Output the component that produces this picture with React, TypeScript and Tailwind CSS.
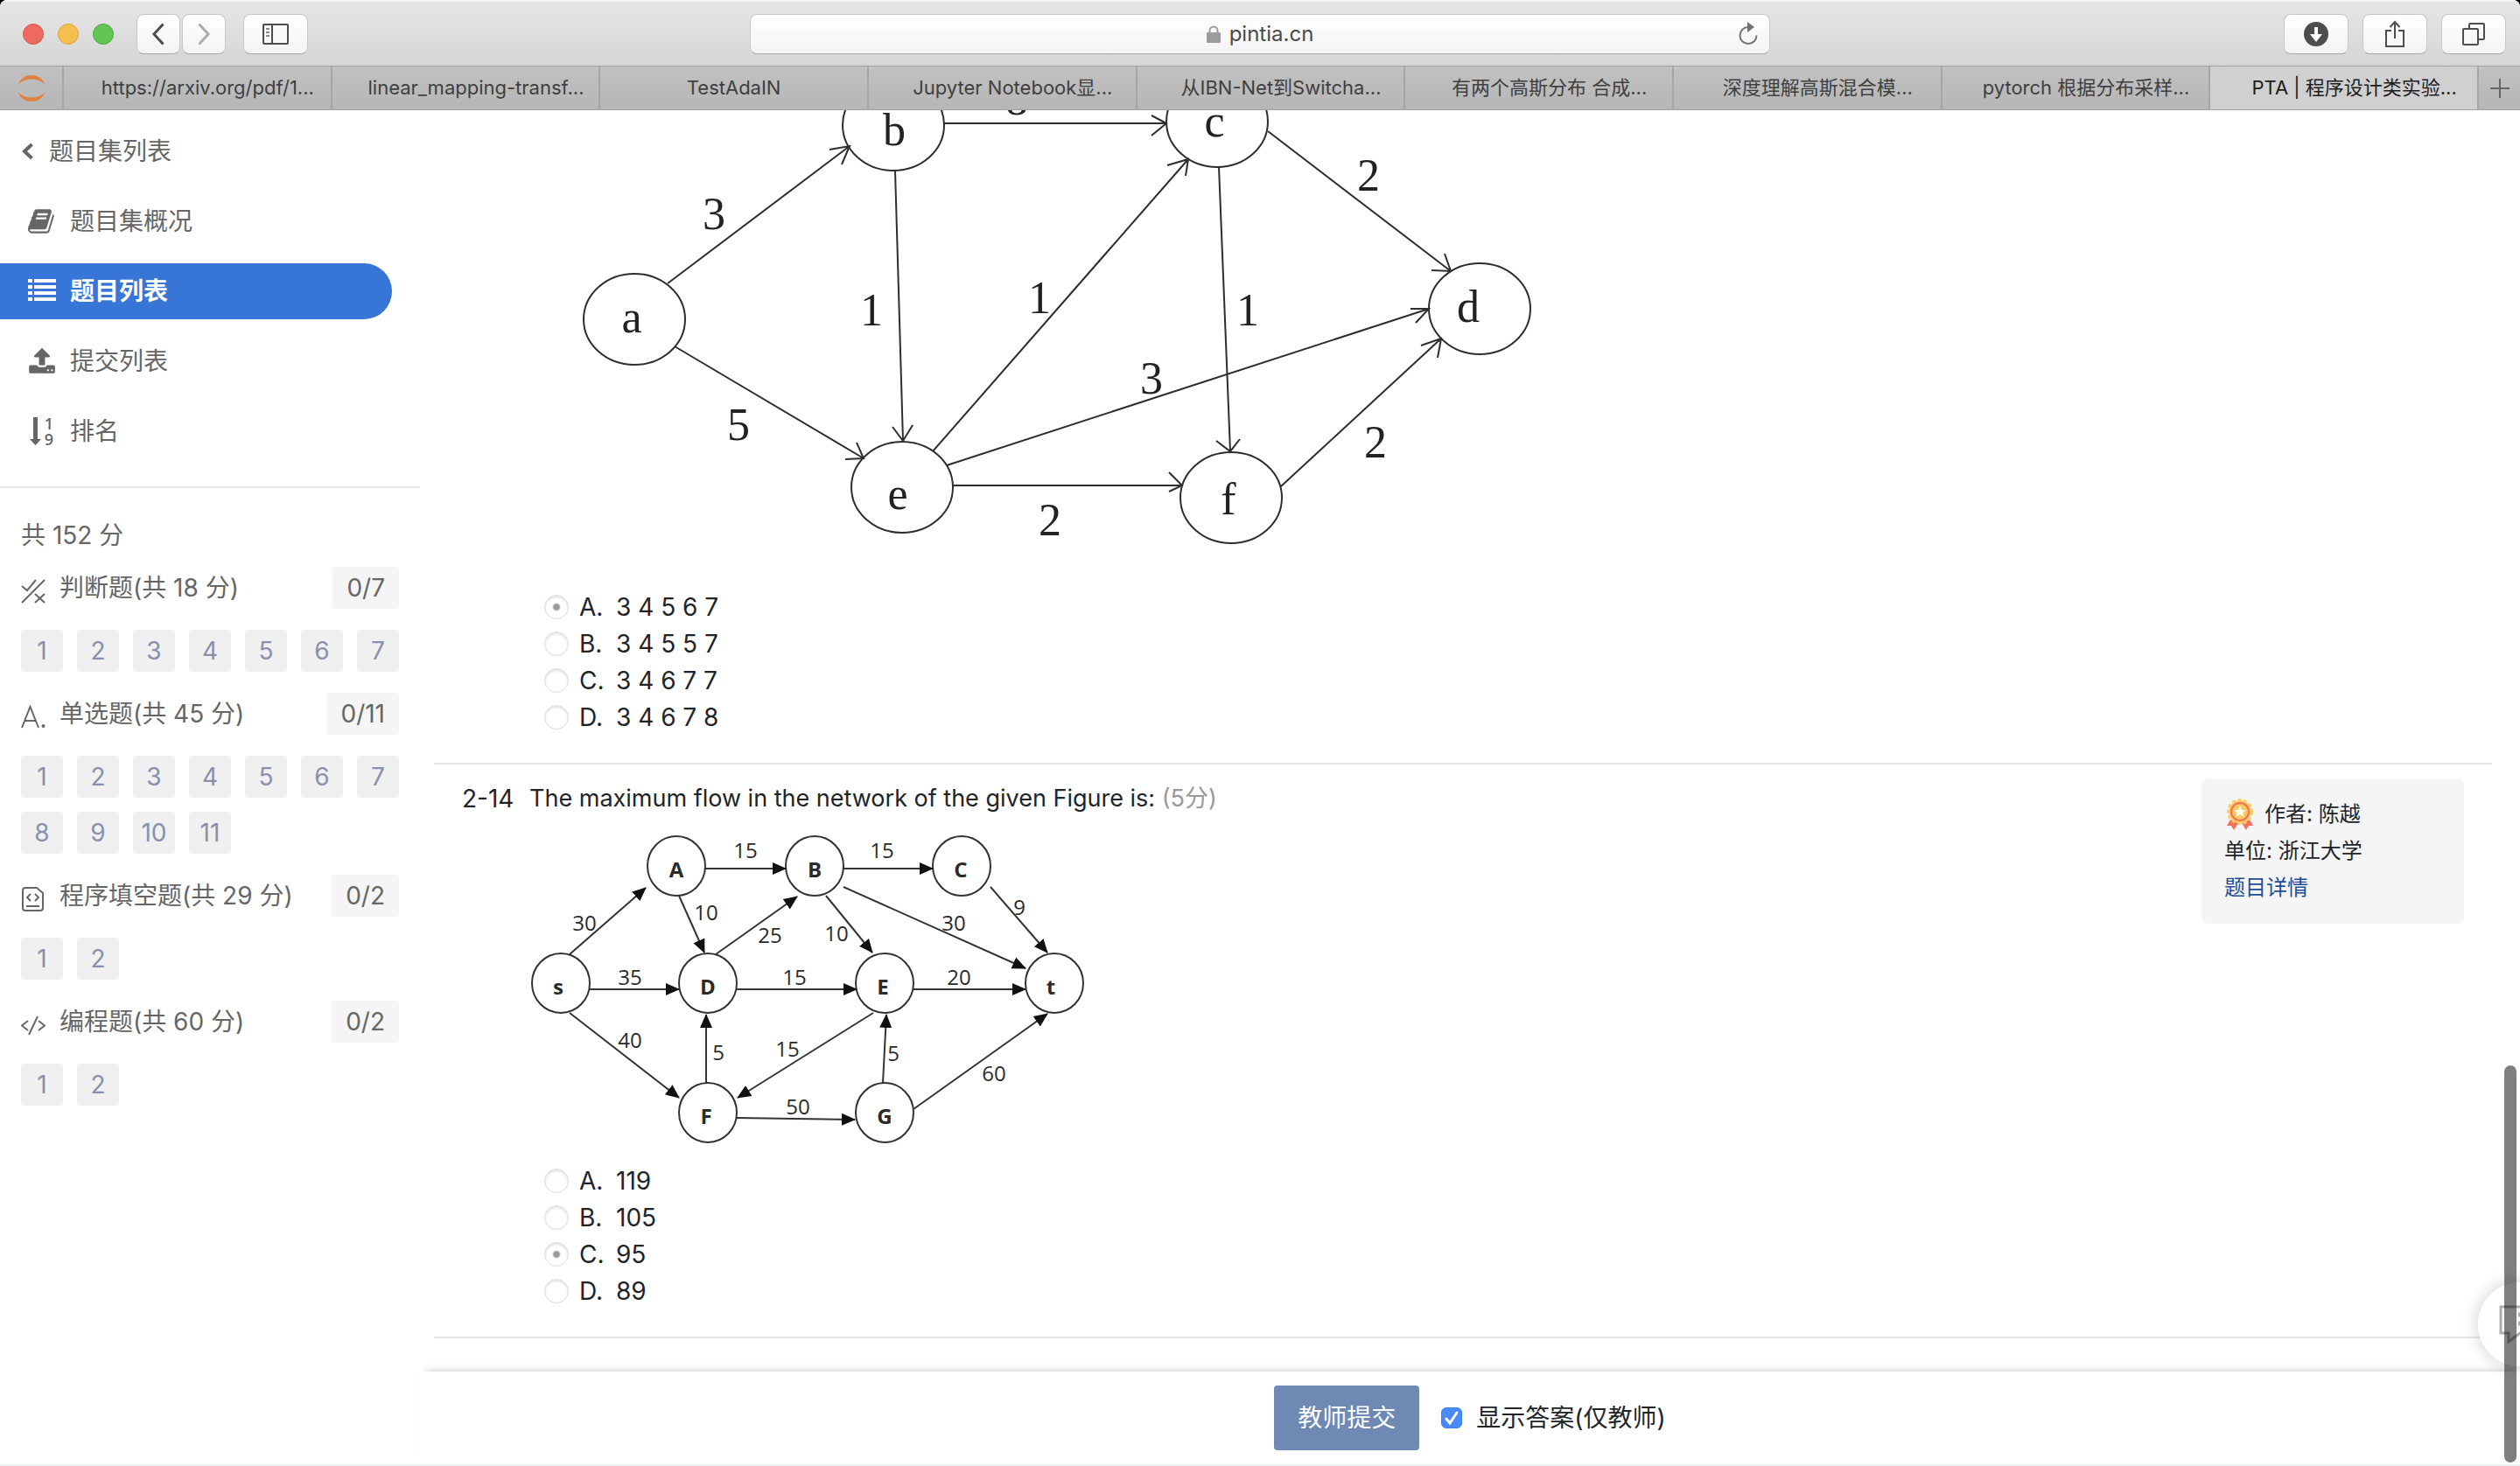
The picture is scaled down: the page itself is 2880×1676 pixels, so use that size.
import React, { useState } from "react";

const FONT = "font-['Inter','Noto_Sans_CJK_SC',sans-serif]";

/* ---------- Browser chrome ---------- */

const TABS = [
  "https://arxiv.org/pdf/1...",
  "linear_mapping-transf...",
  "TestAdaIN",
  "Jupyter Notebook显...",
  "从IBN-Net到Switcha...",
  "有两个高斯分布 合成...",
  "深度理解高斯混合模...",
  "pytorch 根据分布采样...",
  "PTA | 程序设计类实验...",
];

function ToolButton({ label, wide, children }: { label: string; wide?: boolean; children: React.ReactNode }) {
  return (
    <button
      type="button"
      aria-label={label}
      className={`flex h-[46px] items-center justify-center rounded-lg border border-[#c9c9c9] border-b-[#a8a8a8] bg-linear-to-b from-white to-[#f3f3f3] ${wide ? "w-[74px]" : "w-[50px]"}`}
    >
      {children}
    </button>
  );
}

function Toolbar() {
  return (
    <div className="grid h-[75px] grid-cols-[minmax(0,1fr)_40.5%_minmax(0,1fr)] items-center border-t-2 border-[#f4f4f4] bg-linear-to-b from-[#e6e6e6] to-[#d5d5d5]">
      <div className="flex items-center pl-[26px]">
        <div className="flex gap-4">
          <span className="size-6 rounded-full border border-[#d95549] bg-[#ee6a5e]" />
          <span className="size-6 rounded-full border border-[#dba33c] bg-[#f5bf4f]" />
          <span className="size-6 rounded-full border border-[#4aa93c] bg-[#61c654]" />
        </div>
        <div className="ml-[26px] flex gap-0.5">
          <ToolButton label="后退">
            <svg width="16" height="28" viewBox="0 0 16 28" fill="none" stroke="#4d4d4d" strokeWidth="3">
              <path d="M13.500 2.500L3 14l10.500 11.500" />
            </svg>
          </ToolButton>
          <ToolButton label="前进">
            <svg width="16" height="28" viewBox="0 0 16 28" fill="none" stroke="#ababab" strokeWidth="3">
              <path d="M2.500 2.500L13 14L2.500 25.500" />
            </svg>
          </ToolButton>
        </div>
        <div className="ml-5">
          <ToolButton label="边栏" wide>
            <svg width="30" height="24" viewBox="0 0 30 24" fill="none" stroke="#4d4d4d" strokeWidth="2">
              <rect x="1" y="1" width="28" height="22" rx="1" />
              <path d="M11 1v22" />
              <path d="M4 6h4M4 10h4M4 14h4" stroke="#8a8a8a" />
            </svg>
          </ToolButton>
        </div>
      </div>
      <div className="grid h-[46px] grid-cols-[1fr_auto_1fr] items-center rounded-lg border border-[#c9c9c9] border-b-[#a8a8a8] bg-linear-to-b from-white to-[#f3f3f3]">
        <span />
        <label className="flex items-center gap-2.5">
          <svg width="16" height="20" viewBox="0 0 16 20" aria-label="安全连接">
            <rect y="8" width="16" height="12" rx="1" fill="#9c9c9c" />
            <path d="M3.500 9V6a4.500 4.500 0 0 1 9 0v3" fill="none" stroke="#9c9c9c" strokeWidth="2" />
          </svg>
          <input
            aria-label="地址"
            defaultValue="pintia.cn"
            className="field-sizing-content bg-transparent text-2xl leading-8 text-[#4a4a4a] outline-none"
          />
        </label>
        <button type="button" aria-label="重新载入" className="mr-3 justify-self-end">
          <svg width="24" height="28" viewBox="0 0 24 28">
            <path d="M21.500 15.500a9.500 9.500 0 1 1-9.500-9.500" fill="none" stroke="#737373" strokeWidth="2" />
            <path d="M11 0l8 6-8 6z" fill="#737373" />
          </svg>
        </button>
      </div>
      <div className="flex justify-end gap-4 pr-4">
        <ToolButton label="下载" wide>
          <svg width="28" height="28" viewBox="0 0 28 28">
            <circle cx="14" cy="14" r="14" fill="#4d4d4d" />
            <path d="M12 6h4v8h5l-7 9-7-9h5z" fill="#fff" />
          </svg>
        </ToolButton>
        <ToolButton label="共享" wide>
          <svg width="24" height="32" viewBox="0 0 24 32" fill="none" stroke="#4d4d4d" strokeWidth="2">
            <path d="M8 12H2v18h20V12h-6M12 21V3M6.500 8L12 2l5.500 6" />
          </svg>
        </ToolButton>
        <ToolButton label="标签页概览" wide>
          <svg width="26" height="28" viewBox="0 0 26 28" fill="none" stroke="#4d4d4d" strokeWidth="2">
            <rect x="1" y="8" width="17" height="18" rx="1" />
            <path d="M8 7V3a1 1 0 0 1 1-1h15a1 1 0 0 1 1 1v16a1 1 0 0 1-1 1h-5" />
          </svg>
        </ToolButton>
      </div>
    </div>
  );
}

function TabBar() {
  return (
    <div className="flex h-[51px] border-y border-[#a3a3a3] bg-linear-to-b from-[#c1c1c1] to-[#b6b6b6]">
      <button type="button" aria-label="Jupyter" className="flex w-[71px] shrink-0 items-center justify-center">
        <svg width="32" height="32" viewBox="0 0 32 32" fill="#e0813f">
          <path d="M1 11C4 4 9 1 16 1s12 3 15 10C26 7 21 5.500 16 5.500S6 7 1 11z" />
          <path d="M1 21c3 7 8 10 15 10s12-3 15-10c-5 4-10 5.500-15 5.500S6 25 1 21z" />
        </svg>
      </button>
      <div className="grid min-w-0 flex-1 grid-cols-9">
        {TABS.map((tab, i) => (
          <button
            key={tab}
            type="button"
            className={`min-w-0 overflow-hidden border-l-2 border-[#a6a6a6] text-[22px] whitespace-nowrap ${
              i === TABS.length - 1 ? "bg-[#d0d0d0] text-[#1c1c1c]" : "text-[#3f3f3f]"
            } ${tab.endsWith("...") ? "pl-6" : ""}`}
          >
            {tab}
          </button>
        ))}
      </div>
      <button
        type="button"
        aria-label="新建标签页"
        className="flex w-[49px] shrink-0 items-center justify-center border-l-2 border-[#a6a6a6]"
      >
        <svg width="22" height="22" viewBox="0 0 22 22" stroke="#666" strokeWidth="2">
          <path d="M11 0v22M0 11h22" />
        </svg>
      </button>
    </div>
  );
}

/* ---------- Sidebar ---------- */

const BookIcon = (
  <svg width="32" height="32" viewBox="0 0 1792 1792" fill="currentColor">
    <path d="M1639 478q40 57 18 129l-275 906q-19 64-76.500 107.500t-122.500 43.500h-923q-77 0-148.500-53.500t-99.500-131.500q-24-67-2-127 0-4 3-27t4-37q1-8-3-21.500t-3-19.500q2-11 8-21t16.500-23.500 16.500-23.500q23-38 45-91.500t30-91.500q3-10 .5-30t-.5-28q3-11 17-28t17-23q21-36 42-92t25-90q1-9-2.500-32t.5-28q4-13 22-30.500t22-22.500q19-26 42.500-84.500t27.500-96.500q1-8-3-25.500t-2-26.500q2-8 9-18t18-23 17-21q8-12 16.500-30.500t15-35 16-36 19.500-32 26.500-23.500 36-11.500 47.500 5.500l-1 3q38-9 51-9h761q74 0 114 56t18 130l-274 906q-36 119-71.500 153.500t-128.500 34.500h-869q-27 0-38 15-11 16-1 43 24 70 144 70h923q29 0 56-15.500t35-41.500l300-987q7-22 5-57 38 15 59 43zm-1064 2q-4 13 2 22.500t20 9.500h608q13 0 25.500-9.500t16.500-22.500l21-64q4-13-2-22.500t-20-9.500h-608q-13 0-25.500 9.500t-16.500 22.500zm-83 256q-4 13 2 22.500t20 9.500h608q13 0 25.500-9.500t16.500-22.500l21-64q4-13-2-22.500t-20-9.500h-608q-13 0-25.500 9.500t-16.500 22.500z" />
  </svg>
);

const ListIcon = (
  <svg width="32" height="32" viewBox="0 0 32 32" fill="currentColor">
    {[2, 9, 16, 23].map((y) => (
      <g key={y}>
        <rect x="0" y={y} width="5" height="4" />
        <rect x="7" y={y} width="25" height="4" />
      </g>
    ))}
  </svg>
);

const UploadIcon = (
  <svg width="32" height="32" viewBox="0 0 1792 1792" fill="currentColor">
    <path d="M1344 1472q0-26-19-45t-45-19-45 19-19 45 19 45 45 19 45-19 19-45zm256 0q0-26-19-45t-45-19-45 19-19 45 19 45 45 19 45-19 19-45zm128-224v320q0 40-28 68t-68 28h-1472q-40 0-68-28t-28-68v-320q0-40 28-68t68-28h427q21 56 70.500 92t110.500 36h256q61 0 110.500-36t70.500-92h427q40 0 68 28t28 68zm-325-648q-17 40-59 40h-256v448q0 26-19 45t-45 19h-256q-26 0-45-19t-19-45v-448h-256q-42 0-59-40-17-39 14-69l448-448q18-19 45-19t45 19l448 448q31 30 14 69z" />
  </svg>
);

const RankIcon = (
  <svg width="32" height="32" viewBox="0 0 32 32" fill="currentColor" className="overflow-visible">
    <path d="M6 0h5v25h4l-6.500 7L2 25h4z" />
    <text x="24" y="14" fontSize="18" fontWeight="600" textAnchor="middle" className="font-['Open_Sans']">
      1
    </text>
    <text x="24" y="32" fontSize="18" fontWeight="600" textAnchor="middle" className="font-['Open_Sans']">
      9
    </text>
  </svg>
);

const NAV = [
  { text: "题目集概况", icon: BookIcon },
  { text: "题目列表", icon: ListIcon, active: true },
  { text: "提交列表", icon: UploadIcon },
  { text: "排名", icon: RankIcon },
];

const stroke = { fill: "none", stroke: "currentColor", strokeWidth: 2 };

const SECTIONS = [
  {
    text: "判断题(共 18 分)",
    badge: "0/7",
    count: 7,
    icon: (
      <svg width="28" height="28" viewBox="0 0 28 28" {...stroke}>
        <path d="M1 8l6 5L17 1M27 1L1 27M16 17l11 10M27 17L16 27" />
      </svg>
    ),
  },
  {
    text: "单选题(共 45 分)",
    badge: "0/11",
    count: 11,
    icon: (
      <svg width="28" height="28" viewBox="0 0 28 28" {...stroke}>
        <path d="M1 26L10.500 2L20 26M4.500 18h12" />
        <circle cx="25.500" cy="24" r="2" fill="currentColor" stroke="none" />
      </svg>
    ),
  },
  {
    text: "程序填空题(共 29 分)",
    badge: "0/2",
    count: 2,
    icon: (
      <svg width="28" height="28" viewBox="0 0 28 28" {...stroke}>
        <path d="M5 1h13l7 6v17a3 3 0 0 1-3 3H5a3 3 0 0 1-3-3V4a3 3 0 0 1 3-3z" />
        <path d="M11 8l-4 4 4 4M16 8l4 4-4 4M6 22h15" />
      </svg>
    ),
  },
  {
    text: "编程题(共 60 分)",
    badge: "0/2",
    count: 2,
    icon: (
      <svg width="28" height="28" viewBox="0 0 28 28" {...stroke}>
        <path d="M8 9l-7 5.500L8 20M20 9l7 5.500L20 20M19 4L9 25" />
      </svg>
    ),
  },
];

function Sidebar() {
  return (
    <aside className="w-[480px] shrink-0 text-[28px] leading-[42px] text-[#666]">
      <a href="#sets" className="mt-[26px] flex items-center gap-[18px] pl-6">
        <svg width="14" height="20" viewBox="0 0 14 20" fill="none" stroke="currentColor" strokeWidth="4">
          <path d="M12.500 2L4 10l8.500 8" />
        </svg>
        题目集列表
      </a>
      <nav className="mt-[27px] flex flex-col gap-4 pr-8">
        {NAV.map((item) => (
          <a
            key={item.text}
            href={`#${item.text}`}
            className={`flex h-16 items-center gap-4 pl-8 ${item.active ? "rounded-r-full bg-[#3776d6] font-bold text-white" : ""}`}
          >
            {item.icon}
            {item.text}
          </a>
        ))}
      </nav>
      <hr className="mt-[31px] border-t-2 border-[#e5e5e5]" />
      <div className="mt-[33px] pl-6">共 152 分</div>
      <div className="mt-[15px] flex flex-col gap-6 pr-6 pl-6">
        {SECTIONS.map((s) => (
          <section key={s.text} className="flex flex-col gap-6">
            <div className="flex h-12 items-center">
              <span className="mt-2 mr-4">{s.icon}</span>
              <span className="flex-1">{s.text}</span>
              <span className="flex h-12 items-center rounded-sm bg-[#f5f5f5] px-4">{s.badge}</span>
            </div>
            <div className="flex flex-wrap gap-4">
              {Array.from({ length: s.count }, (_, i) => (
                <a
                  key={i}
                  href={`#${s.text}-${i + 1}`}
                  className="flex size-12 items-center justify-center rounded-sm bg-[#f0f0f0] text-[#8791ab]"
                >
                  {i + 1}
                </a>
              ))}
            </div>
          </section>
        ))}
      </div>
    </aside>
  );
}

/* ---------- Figures ---------- */

type Pt = [number, number];

const G1_NODES: [string, number, number, number, number][] = [
  ["a", 725, 365, 722, 380],
  ["b", 1021, 143, 1022, 166],
  ["c", 1391, 139, 1388, 156],
  ["d", 1691, 353, 1678, 368],
  ["e", 1031, 557, 1026, 582],
  ["f", 1407, 569, 1404, 588],
];

/* start, tip, and the two barb ends of each arrow */
const G1_EDGES: [Pt, Pt, Pt, Pt][] = [
  [[763, 324], [971, 167], [948, 171], [962, 188]],
  [[771, 396], [987, 524], [966, 525], [979, 506]],
  [[1023, 195], [1032, 504], [1020, 488], [1043, 486]],
  [[1078, 141], [1333, 141], [1316, 132], [1316, 155]],
  [[1066, 516], [1358, 182], [1334, 189], [1355, 201]],
  [[1082, 532], [1633, 353], [1612, 353], [1618, 369]],
  [[1090, 555], [1351, 555], [1336, 540], [1336, 562]],
  [[1449, 150], [1658, 310], [1636, 309], [1651, 290]],
  [[1393, 191], [1406, 516], [1390, 504], [1417, 502]],
  [[1464, 556], [1647, 387], [1624, 395], [1643, 409]],
];

const G1_LABELS: [string, number, number][] = [
  ["3", 816, 262],
  ["8", 1162, 131],
  ["5", 844, 503],
  ["1", 996, 372],
  ["1", 1188, 358],
  ["2", 1200, 612],
  ["2", 1564, 218],
  ["1", 1426, 372],
  ["3", 1316, 450],
  ["2", 1572, 523],
];

function ActivityGraph() {
  return (
    <svg width="1190" height="547" viewBox="605 126 1190 547" role="img" aria-label="AOE 网" className="block">
      <g fill="none" stroke="#2e2e2e" strokeWidth="2">
        {G1_NODES.map(([n, x, y]) => (
          <ellipse key={n} cx={x} cy={y} rx="58" ry="52" />
        ))}
        {G1_EDGES.map(([a, t, p, q]) => (
          <path key={`${a}-${t}`} d={`M${a}L${t}M${p}L${t}L${q}`} />
        ))}
      </g>
      <g fill="#222" fontSize="52" textAnchor="middle" className="font-['Liberation_Serif',serif]">
        {G1_NODES.map(([n, , , x, y]) => (
          <text key={n} x={x} y={y}>
            {n}
          </text>
        ))}
        {G1_LABELS.map(([t, x, y]) => (
          <text key={`${x}-${y}`} x={x} y={y}>
            {t}
          </text>
        ))}
      </g>
    </svg>
  );
}

const G2_NODES: [string, number, number, number, number][] = [
  ["A", 773, 990, 773, 1003],
  ["B", 931, 990, 931, 1003],
  ["C", 1099, 990, 1098, 1003],
  ["s", 641, 1124, 638, 1137],
  ["D", 809, 1124, 809, 1137],
  ["E", 1011, 1124, 1009, 1137],
  ["t", 1205, 1124, 1201, 1137],
  ["F", 809, 1272, 807, 1285],
  ["G", 1011, 1272, 1011, 1285],
];

const G2_EDGES: [Pt, Pt][] = [
  [[806, 993], [898, 993]],
  [[964, 993], [1066, 993]],
  [[651, 1091], [738, 1015]],
  [[776, 1024], [805, 1089]],
  [[818, 1091], [911, 1025]],
  [[944, 1024], [997, 1089]],
  [[964, 1014], [1172, 1107]],
  [[1132, 1014], [1197, 1089]],
  [[674, 1131], [776, 1131]],
  [[842, 1131], [979, 1131]],
  [[1044, 1131], [1172, 1131]],
  [[651, 1158], [776, 1255]],
  [[807, 1238], [807, 1160]],
  [[998, 1158], [843, 1255]],
  [[1009, 1238], [1013, 1160]],
  [[842, 1278], [977, 1280]],
  [[1044, 1268], [1197, 1159]],
];

const G2_LABELS: [string, number, number][] = [
  ["15", 852, 981],
  ["15", 1008, 981],
  ["30", 668, 1064],
  ["10", 807, 1052],
  ["25", 880, 1078],
  ["10", 956, 1076],
  ["30", 1090, 1064],
  ["9", 1165, 1046],
  ["35", 720, 1126],
  ["15", 908, 1126],
  ["20", 1096, 1126],
  ["40", 720, 1198],
  ["5", 821, 1212],
  ["15", 900, 1208],
  ["5", 1021, 1213],
  ["60", 1136, 1236],
  ["50", 912, 1274],
];

function FlowGraph() {
  return (
    <svg width="640" height="395" viewBox="605 934 640 395" role="img" aria-label="网络流图" className="block">
      <defs>
        <marker
          id="tip"
          viewBox="0 0 16 16"
          refX="15"
          refY="8"
          markerWidth="16"
          markerHeight="16"
          markerUnits="userSpaceOnUse"
          orient="auto"
        >
          <path d="M0 1l16 7-16 7z" fill="#111" />
        </marker>
      </defs>
      <g fill="none" stroke="#333" strokeWidth="2">
        {G2_NODES.map(([n, x, y]) => (
          <ellipse key={n} cx={x} cy={y} rx="33" ry="34" />
        ))}
        {G2_EDGES.map(([a, b]) => (
          <path key={`${a}-${b}`} d={`M${a}L${b}`} markerEnd="url(#tip)" />
        ))}
      </g>
      <g fill="#2b2b2b" fontSize="24" textAnchor="middle" className="font-['Open_Sans','Noto_Sans',sans-serif]">
        {G2_LABELS.map(([t, x, y]) => (
          <text key={`${x}-${y}`} x={x} y={y} fontWeight="500">
            {t}
          </text>
        ))}
        {G2_NODES.map(([n, , , x, y]) => (
          <text key={n} x={x} y={y} fontWeight="700">
            {n}
          </text>
        ))}
      </g>
    </svg>
  );
}

/* ---------- Questions ---------- */

function Options({ name, options, initial }: { name: string; options: string[]; initial: number }) {
  const [picked, setPicked] = useState(initial);
  return (
    <div className="pl-[17px]">
      {options.map((text, i) => (
        <label key={text} className="flex h-[42px] items-center">
          <input
            type="radio"
            name={name}
            checked={picked === i}
            onChange={() => setPicked(i)}
            className="mr-3 size-7 appearance-none rounded-full border border-[#dcdcdc] shadow-[inset_0_2px_3px_rgba(0,0,0,0.12)] checked:bg-[radial-gradient(circle,#9b9b9b_3px,transparent_5px)]"
          />
          <span className="w-[42px]">{"ABCD"[i]}.</span>
          <span>{text}</span>
        </label>
      ))}
    </div>
  );
}

function Medal() {
  return (
    <svg width="34" height="36" viewBox="-2 0 34 36" aria-hidden="true">
      <path d="M5 24L1 31l5 0 3 5 5-8zM27 24l4 7-5 0-3 5-5-8z" fill="#f3705a" />
      <circle cx="16" cy="15" r="13" fill="#fbcb62" />
      <circle cx="16" cy="15" r="14" fill="none" stroke="#fbcb62" strokeWidth="2" strokeDasharray="4 3" />
      <circle cx="16" cy="15" r="10" fill="none" stroke="#f3705a" strokeWidth="2" />
      <path d="M16 8l2 5h5l-4 3 2 5-5-3-5 3 2-5-4-3h5z" fill="#fff" />
    </svg>
  );
}

function AuthorCard() {
  return (
    <div className="mt-[-2px] w-[300px] shrink-0 rounded-lg bg-[#f5f5f5] px-[26px] py-5 text-2xl leading-[42px]">
      <div className="flex items-center gap-3">
        <Medal />
        <span>作者: 陈越</span>
      </div>
      <div>单位: 浙江大学</div>
      <a href="#detail" className="block text-[#1f4e97]">
        题目详情
      </a>
    </div>
  );
}

function Questions() {
  return (
    <main className="flex min-h-0 flex-1 flex-col justify-end overflow-hidden pr-8 pl-4 text-[28px] leading-[42px] text-[#212529]">
      <article className="pr-8 pb-[31px] pl-[109px]">
        <ActivityGraph />
        <Options name="q13" initial={0} options={["3 4 5 6 7", "3 4 5 5 7", "3 4 6 7 7", "3 4 6 7 8"]} />
      </article>
      <hr className="border-t-2 border-[#e5e5e5]" />
      <article className="flex items-start px-8 pt-[18px] pb-[31px]">
        <div className="w-[77px] shrink-0">2-14</div>
        <div className="flex-1">
          <p className="text-[27px]">
            The maximum flow in the network of the given Figure is: <span className="text-[#999]">(5分)</span>
          </p>
          <FlowGraph />
          <Options name="q14" initial={2} options={["119", "105", "95", "89"]} />
        </div>
        <AuthorCard />
      </article>
      <hr className="border-t-2 border-[#e5e5e5]" />
      <div className="h-[38px] shrink-0" />
    </main>
  );
}

function SubmitBar() {
  const [show, setShow] = useState(true);
  return (
    <footer className="flex items-center justify-center gap-[25px] bg-white py-4 text-[28px] leading-[42px] text-[#212529] shadow-[0_-7px_8px_-6px_rgba(0,0,0,0.2)]">
      <button type="button" className="rounded-sm bg-[#6e89b4] px-[27px] py-4 text-white">
        教师提交
      </button>
      <label className="flex items-center gap-4">
        <span className="grid">
          <input
            type="checkbox"
            checked={show}
            onChange={() => setShow(!show)}
            className="col-start-1 row-start-1 size-6 appearance-none rounded-md border border-[#3f7ef0] bg-white checked:bg-[#4a8af8]"
          />
          {show && (
            <svg width="24" height="24" viewBox="0 0 24 24" className="pointer-events-none col-start-1 row-start-1">
              <path d="M6 13l4 5 8-12" fill="none" stroke="#fff" strokeWidth="3" strokeLinecap="round" />
            </svg>
          )}
        </span>
        显示答案(仅教师)
      </label>
    </footer>
  );
}

export default function App() {
  return (
    <div className="h-screen bg-black">
      <div className={`relative flex h-full flex-col overflow-hidden rounded-t-lg bg-white ${FONT}`}>
        <Toolbar />
        <TabBar />
        <div className="flex min-h-0 flex-1 overflow-hidden border-b-2 border-[#edf2f7]">
          <Sidebar />
          <div className="flex min-w-0 flex-1 flex-col">
            <Questions />
            <SubmitBar />
          </div>
        </div>
        <button
          type="button"
          aria-label="反馈"
          className="absolute right-[-48px] bottom-[114px] flex size-24 items-center rounded-full bg-white/90 pl-6 shadow-[0_0_20px_rgba(0,0,0,0.2)]"
        >
          <svg width="48" height="44" viewBox="0 0 48 44" fill="none" stroke="#adadad" strokeWidth="3">
            <path d="M2 2h44v30H24L11 42V32H2z" />
            <path d="M22 11h18M22 21h18" strokeWidth="5" />
          </svg>
        </button>
        <div className="absolute right-1 bottom-1 h-[454px] w-3.5 rounded-full bg-black/50" />
      </div>
    </div>
  );
}
